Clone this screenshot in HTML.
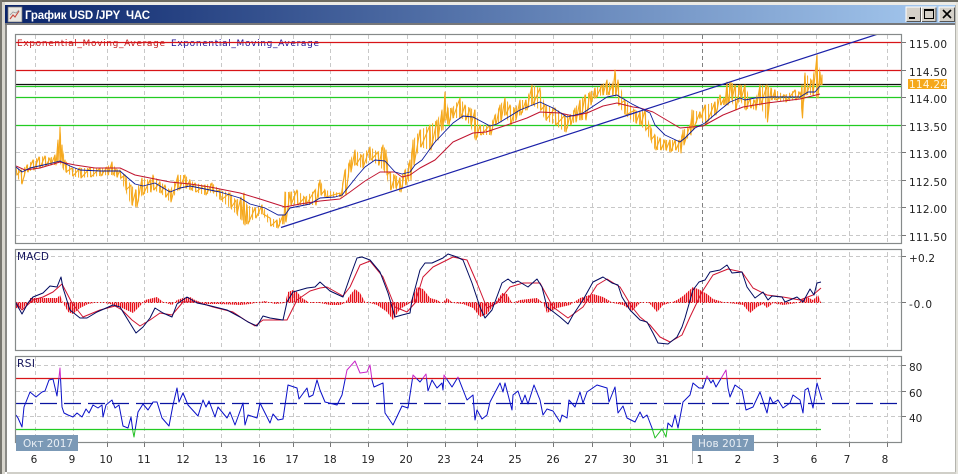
<!DOCTYPE html>
<html><head><meta charset="utf-8"><style>
html,body{margin:0;padding:0;background:#fff;width:958px;height:474px;overflow:hidden}
svg{display:block}
.a{font-family:"DejaVu Sans","Liberation Sans",sans-serif;font-size:10.5px;fill:#222}
.l{fill:none;stroke-linejoin:round}
</style></head><body>
<svg width="958" height="474" viewBox="0 0 958 474" xmlns="http://www.w3.org/2000/svg">
<defs>
<linearGradient id="tb" x1="0" x2="1" y1="0" y2="0"><stop offset="0" stop-color="#0a246a"/><stop offset="1" stop-color="#a6caf0"/></linearGradient>
<pattern id="gold" width="3" height="6" patternUnits="userSpaceOnUse"><rect width="1.1" height="6" fill="#f7b030"/></pattern>
<pattern id="hist" width="2" height="6" patternUnits="userSpaceOnUse"><rect width="1.3" height="6" fill="#e8101a"/></pattern>
<clipPath id="c0"><rect x="16" y="34" width="885" height="209"/></clipPath>
<clipPath id="rb"><rect x="16" y="378.5" width="885" height="51"/></clipPath>
<clipPath id="rm"><rect x="16" y="358" width="885" height="20.5"/></clipPath>
<clipPath id="rg"><rect x="16" y="429.5" width="885" height="13"/></clipPath>
<polyline id="rsi" points="16,415 18,418 22,427 24,407 30,392 36,397 42,392 45,391 49,380 53,379 57,396 60,368 62,407 64,413 68,415 73,417 77,413 82,417 86,409 89,413 93,405 98,408 102,405 103,417 106,405 112,400 115,408 119,405 123,426 128,428 131,417 133,432 134,437 138,412 143,404 148,410 153,402 157,402 162,418 169,426 173,405 177,388 179,402 183,393 188,405 198,416 203,400 206,407 209,401 215,417 218,407 227,418 230,412 235,425 243,403 245,425 248,415 257,418 260,403 270,423 273,414 278,420 283,419 288,385 297,388 299,399 307,388 309,397 313,395 317,380 320,390 325,402 337,405 342,395 347,370 355,361 360,373 367,372 370,365 372,380 374,387 383,383 385,413 393,425 402,406 408,408 413,375 420,382 426,374 428,391 432,380 437,388 442,383 443,390 444,375 452,387 458,377 467,400 473,395 475,420 477,410 482,419 487,415 490,402 500,383 503,392 505,383 512,410 513,395 518,391 522,403 525,395 528,404 534,385 540,400 543,415 547,409 553,411 560,422 562,415 567,418 569,400 575,407 580,392 583,403 587,392 597,385 607,388 609,402 615,387 618,413 623,406 627,418 635,422 640,412 643,418 647,415 652,428 655,438 662,429 666,437 668,423 672,427 675,415 678,428 683,402 690,395 693,383 699,388 703,388 707,376 711,383 713,380 716,387 726,370 728,388 730,397 735,385 742,390 746,410 753,407 760,392 767,413 770,397 773,403 778,400 783,408 790,403 793,395 800,400 803,413 805,390 808,388 813,408 817,383 822,400"/>
</defs>
<!-- window chrome -->
<rect width="958" height="474" fill="#fff"/>
<rect width="958" height="2" fill="#6e6c62"/>
<rect y="2" width="958" height="3" fill="#ecebe6"/>
<rect x="0" y="0" width="2" height="474" fill="#77766f"/>
<rect x="2" y="2" width="3" height="472" fill="#d8d6ce"/>
<rect x="5" y="5" width="2" height="467" fill="#8a8a86"/>
<rect x="5" y="5" width="950" height="18" fill="url(#tb)"/>
<rect x="5" y="23" width="950" height="2" fill="#77787a"/>
<rect x="7" y="472" width="951" height="2" fill="#d0cfc8"/>
<rect x="955" y="5" width="1" height="467" fill="#b4b4ae"/>
<rect x="956" y="2" width="2" height="472" fill="#e4e3dc"/>
<!-- title icon -->
<rect x="8" y="7" width="14" height="15" fill="#e8e6e0" stroke="#777" stroke-width=".7"/>
<path d="M10 19l3-4 2 2 4-6" fill="none" stroke="#c8483c" stroke-width="1.1"/>
<path d="M10 15l3-3 3 1 3-3" fill="none" stroke="#9a9a9a" stroke-width=".8"/>
<text x="25" y="19" font-family="'Liberation Sans',sans-serif" font-size="11.5" font-weight="bold" fill="#fff" textLength="125" lengthAdjust="spacing" xml:space="preserve">График USD /JPY  ЧАС</text>
<!-- buttons -->
<g>
<rect x="906" y="7" width="15" height="15" fill="#d4d0c8"/><path d="M906 22V7h15" fill="none" stroke="#fff"/><path d="M906.5 21.5h14v-14" fill="none" stroke="#555"/>
<rect x="909" y="17" width="6" height="2" fill="#000"/>
<rect x="921.5" y="7" width="15" height="15" fill="#d4d0c8"/><path d="M921.5 22V7h15" fill="none" stroke="#fff"/><path d="M922 21.5h14v-14" fill="none" stroke="#555"/>
<rect x="924.5" y="9.5" width="9" height="9" fill="none" stroke="#000"/><rect x="924" y="9" width="10" height="2" fill="#000"/>
<rect x="939" y="7" width="16" height="15" fill="#d4d0c8"/><path d="M939 22V7h16" fill="none" stroke="#fff"/><path d="M939.5 21.5h15v-14" fill="none" stroke="#555"/>
<path d="M943 10l8 8M951 10l-8 8" stroke="#000" stroke-width="1.6"/>
</g>
<!-- grid -->
<path fill="none" stroke="#c8c8c8" stroke-dasharray="4 3" d="M35.5 35V442M73.5 35V442M107.5 35V442M144.5 35V442M183.5 35V442M221.5 35V442M259.5 35V442M293.5 35V442M330.5 35V442M368.5 35V442M407.5 35V442M445.5 35V442M477.5 35V442M515.5 35V442M553.5 35V442M592.5 35V442M630.5 35V442M663.5 35V442M739.5 35V442M777.5 35V442M816.5 35V442M849.5 35V442M887.5 35V442"/>
<path fill="none" stroke="#808080" stroke-dasharray="4 3" d="M702.5 35V442"/>
<path fill="none" stroke="#c8c8c8" stroke-dasharray="4 3" d="M16 152.500H901M16 180.500H901M16 207.500H901M16 235.500H901M16 256.500H901M16 302.500H901M16 365.500H901M16 391.500H901M16 416.500H901"/>
<rect x="16" y="244" width="886" height="5" fill="#fff"/>
<rect x="16" y="351" width="886" height="6" fill="#fff"/>
<!-- legend -->
<text x="17" y="46" font-family="'DejaVu Sans',sans-serif" font-size="9" fill="#c01818" textLength="148" lengthAdjust="spacing">Exponential_Moving_Average</text>
<text x="171" y="46" font-family="'DejaVu Sans',sans-serif" font-size="9" fill="#1a0a90" textLength="148" lengthAdjust="spacing">Exponential_Moving_Average</text>
<!-- levels -->
<g stroke-width="1.3" fill="none">
<path d="M16 42.500H901M16 70.500H901" stroke="#d81418"/>
<path d="M16 84.500H901" stroke="#101010"/>
<path d="M16 86.500H901M16 97.500H901M16 125.500H901" stroke="#22cc22"/>
</g>
<!-- gold price -->
<g clip-path="url(#c0)">
<polygon fill="url(#gold)" points="16,167 21,170 27,165 33,160 39,157 45,156 50,158 55,155 58,140 60,127 62,145 65,160 72,168 80,168 90,168 100,168 107,167 112,162 116,169 120,170 125,175 131,185 136,190 142,178 150,180 153,175 160,182 165,185 170,190 178,175 185,175 190,180 195,183 205,185 212,183 220,190 230,193 236,200 241,197 244,193 247,205 255,208 262,205 270,218 277,220 283,215 285,192 290,192 297,190 305,197 315,190 320,180 325,190 340,193 345,170 350,160 355,150 362,155 370,147 378,152 383,145 386,150 390,172 395,175 400,178 405,170 410,160 413,140 420,130 430,125 437,120 442,110 445,92 448,108 452,108 460,98 465,105 470,108 475,110 480,125 490,125 495,115 500,105 505,98 510,105 515,108 520,100 526,100 532,85 540,88 545,105 555,108 565,115 570,115 575,108 580,100 585,95 590,92 595,88 602,85 607,80 612,85 615,70 618,80 625,100 635,110 640,112 645,110 650,125 655,135 660,138 665,140 670,140 675,140 680,140 683,130 690,125 692,110 700,112 705,105 715,102 720,95 724,98 727,82 731,82 735,85 740,85 745,85 750,98 755,100 760,85 767,85 771,88 775,90 785,95 795,90 800,92 802,85 805,73 812,80 817,55 820,72 822,75 822,85 820,85 817,98 812,95 805,95 802,118 800,98 795,100 785,102 775,100 771,100 767,122 760,105 755,110 750,108 745,110 740,100 735,110 731,100 727,105 724,105 720,105 715,115 705,125 700,118 692,130 690,135 683,145 680,153 675,150 670,152 665,150 660,150 655,150 650,140 645,130 640,125 635,123 625,115 618,105 615,95 612,95 607,95 602,95 595,98 590,105 585,120 580,120 575,122 570,125 565,132 555,125 545,120 540,110 532,105 526,110 520,115 515,120 510,125 505,115 500,122 495,125 490,135 480,135 475,140 470,125 465,120 460,118 452,118 448,125 445,120 442,130 437,140 430,150 420,147 413,165 410,180 405,185 400,192 395,188 390,190 386,175 383,170 378,165 370,160 362,168 355,165 350,172 345,195 340,197 325,197 320,195 315,205 305,205 297,205 290,205 285,222 283,224 277,228 270,226 262,214 255,218 247,224 244,225 241,220 236,214 230,208 220,200 212,192 205,195 195,192 190,190 185,188 178,190 170,202 165,197 160,193 153,190 150,192 142,195 136,207 131,205 125,190 120,178 116,177 112,175 107,175 100,176 90,177 80,178 72,176 65,172 62,168 60,163 58,162 55,165 50,165 45,166 39,168 33,170 27,172 21,184 16,175"/>
<polyline class="l" stroke="#f5a81c" stroke-width="1.1" points="16,167 17,175 21,170 22,184 27,165 28,172 33,160 34,170 39,157 40,168 45,156 46,166 50,158 51,165 55,155 56,165 58,140 59,162 60,127 61,163 62,145 63,168 65,160 66,172 72,168 73,176 80,168 81,178 90,168 91,177 100,168 101,176 107,167 108,175 112,162 113,175 116,169 117,177 120,170 121,178 125,175 126,190 131,185 132,205 136,190 137,207 142,178 143,195 150,180 151,192 153,175 154,190 160,182 161,193 165,185 166,197 170,190 171,202 178,175 179,190 185,175 186,188 190,180 191,190 195,183 196,192 205,185 206,195 212,183 213,192 220,190 221,200 230,193 231,208 236,200 237,214 241,197 242,220 244,193 245,225 247,205 248,224 255,208 256,218 262,205 263,214 270,218 271,226 277,220 278,228 283,215 284,224 285,192 286,222 290,192 291,205 297,190 298,205 305,197 306,205 315,190 316,205 320,180 321,195 325,190 326,197 340,193 341,197 345,170 346,195 350,160 351,172 355,150 356,165 362,155 363,168 370,147 371,160 378,152 379,165 383,145 384,170 386,150 387,175 390,172 391,190 395,175 396,188 400,178 401,192 405,170 406,185 410,160 411,180 413,140 414,165 420,130 421,147 430,125 431,150 437,120 438,140 442,110 443,130 445,92 446,120 448,108 449,125 452,108 453,118 460,98 461,118 465,105 466,120 470,108 471,125 475,110 476,140 480,125 481,135 490,125 491,135 495,115 496,125 500,105 501,122 505,98 506,115 510,105 511,125 515,108 516,120 520,100 521,115 526,100 527,110 532,85 533,105 540,88 541,110 545,105 546,120 555,108 556,125 565,115 566,132 570,115 571,125 575,108 576,122 580,100 581,120 585,95 586,120 590,92 591,105 595,88 596,98 602,85 603,95 607,80 608,95 612,85 613,95 615,70 616,95 618,80 619,105 625,100 626,115 635,110 636,123 640,112 641,125 645,110 646,130 650,125 651,140 655,135 656,150 660,138 661,150 665,140 666,150 670,140 671,152 675,140 676,150 680,140 681,153 683,130 684,145 690,125 691,135 692,110 693,130 700,112 701,118 705,105 706,125 715,102 716,115 720,95 721,105 724,98 725,105 727,82 728,105 731,82 732,100 735,85 736,110 740,85 741,100 745,85 746,110 750,98 751,108 755,100 756,110 760,85 761,105 767,85 767.500,122 771,88 772,100 775,90 776,100 785,95 786,102 795,90 796,100 800,92 801,98 802,85 802.500,118 805,73 806,95 812,80 813,95 817,55 818,98 820,72 821,85 822,75 822,85"/>
<!-- red EMA -->
<polyline class="l" stroke="#c01430" stroke-width="1" points="16,166 25,170 40,168 60,162 75,165 95,168 120,168 135,175 150,178 170,182 190,184 210,187 240,193 260,199 285,207 300,204 320,201 340,199 350,192 365,181 380,172 395,172 402,177 410,175 420,168 435,160 453,142 473,133 486,132 507,125 527,118 540,112 560,113 573,116 587,113 603,106 617,103 633,107 640,108 653,112 680,128 703,126 723,115 743,107 767,103 800,99 820,94"/>
<!-- blue EMA -->
<polyline class="l" stroke="#0a1a9a" stroke-width=".9" points="16,167 22,172 30,168 48,164 60,161 70,166 80,170 100,171 120,171 128,178 135,184 143,186 155,183 170,192 180,188 190,186 205,189 220,192 240,198 250,204 265,208 278,215 285,215 290,208 300,206 310,204 320,198 335,197 342,195 350,185 358,175 365,167 375,160 385,161 395,172 402,174 410,172 415,165 422,160 435,142 453,123 463,116 473,117 490,126 497,124 520,110 540,102 553,108 567,117 583,113 607,97 617,95 632,104 640,108 650,113 655,125 665,135 680,142 685,138 695,128 705,123 720,110 730,102 740,98 745,100 755,98 770,97 790,97 800,97 808,92 815,92 820,86"/>
<!-- trendline -->
<path d="M281 227.500L878 34" stroke="#1a20a8" stroke-width="1.2" fill="none"/>
</g>
<!-- MACD -->
<polygon fill="url(#hist)" points="16,308 22,309 28,303 30,298 40,298 50,298 57,298 60,295 63,303 68,312 73,314 80,308 88,304 100,302 110,304 120,307 133,313 140,306 145,300 157,297 163,302 172,305 177,300 183,298 190,297 195,300 205,304 220,304 240,305 250,304 265,301 275,304 285,303 288,292 293,290 297,292 302,298 310,303 320,303 330,305 340,305 345,303 350,295 355,289 360,293 365,302 370,303 377,305 387,312 393,320 400,309 410,303 417,287 423,289 430,298 437,300 442,303 447,298 453,303 463,304 473,308 480,317 487,314 493,306 502,293 507,294 512,303 520,300 537,298 543,303 547,313 557,308 570,305 580,298 593,294 603,297 613,303 623,305 632,311 640,303 647,302 650,304 657,312 663,305 670,303 677,300 683,296 693,287 700,290 707,294 713,299 723,302 728,303 737,304 743,305 750,313 757,307 763,304 767,308 773,303 783,305 797,303 807,297 813,300 818,295 821,303 821,302.500 16,302.500"/>
<path d="M16 302.500H821" stroke="#e01018" stroke-dasharray="1 2" fill="none"/>
<polyline class="l" stroke="#d01430" stroke-width="1" points="16,302 22,310 33,300 43,297 53,292 62,284 72,303 83,317 100,310 115,306 122,310 132,320 140,326 150,320 160,313 172,315 183,302 197,302 213,307 233,312 245,320 255,326 263,320 287,320 297,300 310,291 320,288 327,287 343,296 350,287 360,265 370,261 383,277 395,307 407,312 415,303 423,277 433,267 443,262 453,257 467,260 477,283 487,308 497,303 510,287 523,283 540,283 553,307 568,318 583,307 597,285 607,279 620,287 632,307 640,317 650,325 660,337 670,342 682,335 690,317 702,292 713,275 728,269 742,272 753,288 767,295 783,297 800,300 813,295 821,288"/>
<polyline class="l" stroke="#000a60" stroke-width="1" points="16,303 22,314 28,303 33,297 43,293 50,286 57,287 61,277 63,288 70,310 80,318 87,318 97,312 113,305 120,307 128,320 136,333 143,327 150,318 155,308 163,313 172,317 177,304 187,297 197,303 207,305 227,310 240,317 248,322 257,326 263,316 270,318 283,320 287,302 293,292 307,288 315,287 320,282 330,291 343,297 350,277 357,258 362,257 370,260 380,272 388,293 395,317 402,315 410,313 412,300 420,270 425,263 432,263 443,258 448,254 457,257 463,260 472,283 480,307 485,318 492,310 502,283 508,279 513,283 518,281 528,287 537,279 542,287 547,307 560,317 568,324 573,315 583,300 593,282 603,277 612,283 618,285 622,297 630,310 640,320 647,322 653,333 658,343 668,344 677,337 682,327 685,318 693,290 699,282 705,280 710,272 720,270 727,265 732,273 742,272 747,287 755,298 763,292 768,300 772,296 782,297 785,302 797,297 803,302 810,289 814,295 817,283 821,282"/>
<!-- RSI levels -->
<path d="M16 378.500H821" stroke="#d81418" stroke-width="1.3" fill="none"/>
<path d="M16 429.500H821" stroke="#22cc22" stroke-width="1.3" fill="none"/>
<path d="M16 403.500H897" stroke="#0a14a0" stroke-width="1.2" stroke-dasharray="17 7" fill="none"/>
<!-- RSI -->
<g class="l" stroke-width="1">
<use href="#rsi" clip-path="url(#rb)" stroke="#0a10c8"/>
<use href="#rsi" clip-path="url(#rm)" stroke="#c828c8"/>
<use href="#rsi" clip-path="url(#rg)" stroke="#22c022"/>
</g>
<!-- pane borders -->
<g fill="none" stroke="#868a8a" stroke-width="1.2">
<rect x="15.500" y="34.500" width="886" height="209"/>
<rect x="15.500" y="249.500" width="886" height="101"/>
<rect x="15.500" y="356.500" width="886" height="86"/>
</g>
<!-- ticks -->
<path fill="none" stroke="#777" d="M902 42.500h4M902 70.500h4M902 97.500h4M902 125.500h4M902 152.500h4M902 180.500h4M902 207.500h4M902 235.500h4M902 256.500h4M902 302.500h4M902 365.500h4M902 391.500h4M902 416.500h4"/>
<path fill="none" stroke="#777" d="M35.500 443v4M73.500 443v4M107.500 443v4M144.500 443v4M183.500 443v4M221.500 443v4M259.500 443v4M293.500 443v4M330.500 443v4M368.500 443v4M407.500 443v4M445.500 443v4M477.500 443v4M515.500 443v4M553.500 443v4M592.500 443v4M630.500 443v4M663.500 443v4M702.500 443v4M739.500 443v4M777.500 443v4M816.500 443v4M849.500 443v4M887.500 443v4"/>
<!-- axis labels -->
<g class="a">
<text x="909" y="48" textLength="38">115.00</text>
<text x="909" y="76" textLength="38">114.50</text>
<text x="909" y="103" textLength="38">114.00</text>
<text x="909" y="131" textLength="38">113.50</text>
<text x="909" y="158" textLength="38">113.00</text>
<text x="909" y="186" textLength="38">112.50</text>
<text x="909" y="213" textLength="38">112.00</text>
<text x="909" y="241" textLength="38">111.50</text>
<text x="909" y="262" textLength="26">+0.2</text>
<text x="909" y="308" textLength="23">-0.0</text>
<text x="909" y="371">80</text>
<text x="909" y="397">60</text>
<text x="909" y="422">40</text>
</g>
<rect x="908" y="79" width="39" height="10" fill="#f5a81c"/>
<text x="909" y="88" class="a" style="fill:#fff6e0" textLength="38">114.24</text>
<!-- pane labels -->
<text x="17" y="260" class="a" style="fill:#12125a" textLength="32">MACD</text>
<text x="17" y="367" class="a" style="fill:#12125a" textLength="18">RSI</text>
<!-- month labels -->
<rect x="16" y="435" width="62" height="16" fill="#7b99b6"/>
<text x="23" y="447" class="a" style="fill:#e8eef4" textLength="50">Окт 2017</text>
<path d="M692.500 451v13" stroke="#b8b8b8" fill="none"/>
<rect x="692" y="435" width="62" height="16" fill="#7b99b6"/>
<text x="698" y="447" class="a" style="fill:#e8eef4" textLength="51">Нов 2017</text>
<!-- date labels -->
<g class="a" text-anchor="middle">
<text x="34" y="463">6</text><text x="72" y="463">9</text><text x="106" y="463">10</text><text x="144" y="463">11</text><text x="183" y="463">12</text><text x="221" y="463">13</text><text x="259" y="463">16</text><text x="292" y="463">17</text><text x="330" y="463">18</text><text x="368" y="463">19</text><text x="406" y="463">20</text><text x="444" y="463">23</text><text x="477" y="463">24</text><text x="515" y="463">25</text><text x="553" y="463">26</text><text x="591" y="463">27</text><text x="629" y="463">30</text><text x="662" y="463">31</text><text x="700" y="463">1</text><text x="738" y="463">2</text><text x="776" y="463">3</text><text x="814" y="463">6</text><text x="847" y="463">7</text><text x="885" y="463">8</text>
</g>
</svg>
</body></html>
